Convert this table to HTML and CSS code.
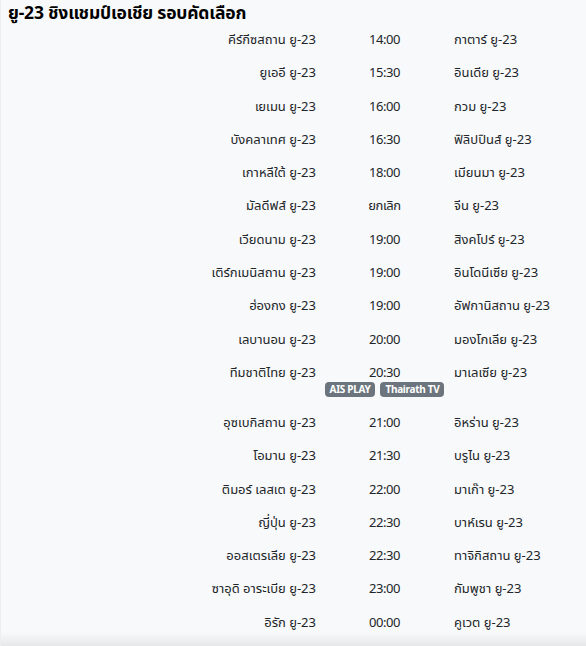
FILE: index.html
```html
<!DOCTYPE html>
<html lang="th">
<head>
<meta charset="utf-8">
<link rel="stylesheet" href="styles.css">
</head>
<body>
<div class="page">
  <h1 class="title">ยู-23 ชิงแชมป์เอเชีย รอบคัดเลือก</h1>
  <div class="list">
    <div class="row"><div class="home">คีร์กีซสถาน ยู-23</div><div class="time">14:00</div><div class="away">กาตาร์ ยู-23</div></div>
    <div class="row"><div class="home">ยูเออี ยู-23</div><div class="time">15:30</div><div class="away">อินเดีย ยู-23</div></div>
    <div class="row"><div class="home">เยเมน ยู-23</div><div class="time">16:00</div><div class="away">กวม ยู-23</div></div>
    <div class="row"><div class="home">บังคลาเทศ ยู-23</div><div class="time">16:30</div><div class="away">ฟิลิปปินส์ ยู-23</div></div>
    <div class="row"><div class="home">เกาหลีใต้ ยู-23</div><div class="time">18:00</div><div class="away">เมียนมา ยู-23</div></div>
    <div class="row"><div class="home">มัลดีฟส์ ยู-23</div><div class="time">ยกเลิก</div><div class="away">จีน ยู-23</div></div>
    <div class="row"><div class="home">เวียดนาม ยู-23</div><div class="time">19:00</div><div class="away">สิงคโปร์ ยู-23</div></div>
    <div class="row"><div class="home">เติร์กเมนิสถาน ยู-23</div><div class="time">19:00</div><div class="away">อินโดนีเซีย ยู-23</div></div>
    <div class="row"><div class="home">ฮ่องกง ยู-23</div><div class="time">19:00</div><div class="away">อัฟกานิสถาน ยู-23</div></div>
    <div class="row"><div class="home">เลบานอน ยู-23</div><div class="time">20:00</div><div class="away">มองโกเลีย ยู-23</div></div>
    <div class="row row-tv"><div class="home">ทีมชาติไทย ยู-23</div><div class="time">20:30<div class="channels"><span class="badge">AIS PLAY</span><span class="badge">Thairath TV</span></div></div><div class="away">มาเลเซีย ยู-23</div></div>
    <div class="row"><div class="home">อุซเบกิสถาน ยู-23</div><div class="time">21:00</div><div class="away">อิหร่าน ยู-23</div></div>
    <div class="row"><div class="home">โอมาน ยู-23</div><div class="time">21:30</div><div class="away">บรูไน ยู-23</div></div>
    <div class="row"><div class="home">ติมอร์ เลสเต ยู-23</div><div class="time">22:00</div><div class="away">มาเก๊า ยู-23</div></div>
    <div class="row"><div class="home">ญี่ปุ่น ยู-23</div><div class="time">22:30</div><div class="away">บาห์เรน ยู-23</div></div>
    <div class="row"><div class="home">ออสเตรเลีย ยู-23</div><div class="time">22:30</div><div class="away">ทาจิกิสถาน ยู-23</div></div>
    <div class="row"><div class="home">ซาอุดิ อาระเบีย ยู-23</div><div class="time">23:00</div><div class="away">กัมพูชา ยู-23</div></div>
    <div class="row"><div class="home">อิรัก ยู-23</div><div class="time">00:00</div><div class="away">คูเวต ยู-23</div></div>
  </div>
</div>
</body>
</html>
```
FILE: styles.css
```css
* { box-sizing: border-box; }
html, body { margin: 0; padding: 0; }
body {
  background: #f8f9fa;
  font-family: "Noto Sans", "Noto Sans Thai", "Liberation Sans", sans-serif;
  color: #212529;
  height: 646px;
  overflow: hidden;
}
.page {
  border-left: 1px solid #eceef0;
  min-height: 646px;
  position: relative;
}
.page::after {
  content: "";
  position: absolute;
  left: 0; right: 0; bottom: 0;
  height: 14px;
  background: linear-gradient(to bottom, rgba(0,0,0,0), rgba(0,0,0,0.07));
}
.title {
  margin: 0;
  padding: 1px 0 0 7px;
  font-size: 17.5px;
  font-weight: 700;
  line-height: 22px;
  color: #000;
  letter-spacing: -0.2px;
}
.list {
  padding-top: 0;
}
.row {
  display: grid;
  grid-template-columns: 315px 137px 1fr;
  font-size: 13px;
  line-height: 17px;
  padding: 8px 0;
  height: 33.3px;
}
.row-tv { height: 50px; }
.home { text-align: right; }
.time { text-align: center; letter-spacing: -0.4px; }
.away { padding-left: 1px; }
.channels {
  display: flex;
  justify-content: center;
  gap: 5px;
  margin-top: 1px;
  letter-spacing: -0.3px;
}
.badge {
  background: #6c757d;
  color: #fff;
  font-size: 10px;
  font-weight: 700;
  line-height: 15px;
  padding: 0 5px;
  border-radius: 4px;
}
```
